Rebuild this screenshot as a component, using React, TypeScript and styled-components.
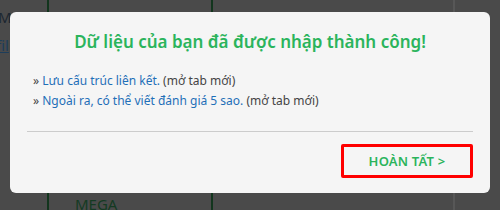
import styled, { createGlobalStyle } from "styled-components";

const GlobalStyle = createGlobalStyle`
  html, body {
    margin: 0;
    padding: 0;
    background: #4a4a4a;
  }
  body {
    font-family: "Noto Sans", "Open Sans", sans-serif;
  }
`;

const Page = styled.div`
  position: relative;
  width: 500px;
  height: 210px;
  overflow: hidden;
  background: #4a4a4a;
`;

const Table = styled.div`
  display: grid;
  grid-template-columns: 49px 164px 242px 1fr;
  height: 210px;
`;

const Col = styled.div<{ $line?: string }>`
  border-right: 2px solid ${(p) => p.$line || "transparent"};
  position: relative;
  font-size: 14px;
  color: #1c2630;
`;

const Ghost = styled.span<{ $top: number; $left: number; $color?: string; $under?: boolean }>`
  position: absolute;
  top: ${(p) => p.$top}px;
  left: ${(p) => p.$left}px;
  color: ${(p) => p.$color || "#1c2630"};
  font-size: 15px;
  line-height: 1;
  text-decoration: ${(p) => (p.$under ? "underline" : "none")};
`;

const Modal = styled.div`
  position: absolute;
  left: 10px;
  top: 12px;
  width: 480px;
  height: 181px;
  box-sizing: border-box;
  background: #f5f5f5;
  border-radius: 6px;
  padding: 18px 17px 16px;
  display: flex;
  flex-direction: column;
`;

const Title = styled.h2`
  margin: 0;
  text-align: center;
  color: #2bb45c;
  font-size: 17px;
  font-weight: 600;
  line-height: 24px;
`;

const List = styled.ul`
  list-style: none;
  margin: 17px 0 0;
  padding: 0 0 0 6px;
`;

const Item = styled.li`
  font-size: 12px;
  line-height: 20px;
  color: #444;
`;

const Link = styled.a`
  color: #1f6fb8;
  text-decoration: none;
`;

const Divider = styled.hr`
  margin: 20px 0 0;
  border: 0;
  border-top: 1px solid #cccccc;
`;

const Footer = styled.div`
  display: flex;
  justify-content: flex-end;
  margin-top: 12px;
`;

const Button = styled.button`
  width: 132px;
  height: 34px;
  box-sizing: border-box;
  border: 3px solid #ff0000;
  border-radius: 2px;
  background: #f5f5f5;
  color: #2bb45c;
  font-family: "Noto Sans", "Open Sans", sans-serif;
  font-size: 13px;
  font-weight: 600;
  letter-spacing: 0.2px;
  cursor: pointer;
`;

export default function App() {
  return (
    <>
      <GlobalStyle />
      <Page>
        <Table>
          <Col $line="#12351d">
            <Ghost $top={10} $left={-2}>MI</Ghost>
            <Ghost $top={38} $left={-4} $color="#1d3d5a" $under>
              fil
            </Ghost>
          </Col>
          <Col $line="#12351d">
            <Ghost $top={9} $left={26}>???</Ghost>
            <Ghost $top={197} $left={26} $color="#143a22">
              MEGA
            </Ghost>
          </Col>
          <Col $line="#575757" />
          <Col />
        </Table>
        <Modal>
          <Title>Dữ liệu của bạn đã được nhập thành công!</Title>
          <List>
            <Item>
              » <Link href="#">Lưu cấu trúc liên kết.</Link> (mở tab mới)
            </Item>
            <Item>
              » <Link href="#">Ngoài ra, có thể viết đánh giá 5 sao.</Link> (mở tab mới)
            </Item>
          </List>
          <Divider />
          <Footer>
            <Button>HOÀN TẤT &gt;</Button>
          </Footer>
        </Modal>
      </Page>
    </>
  );
}
